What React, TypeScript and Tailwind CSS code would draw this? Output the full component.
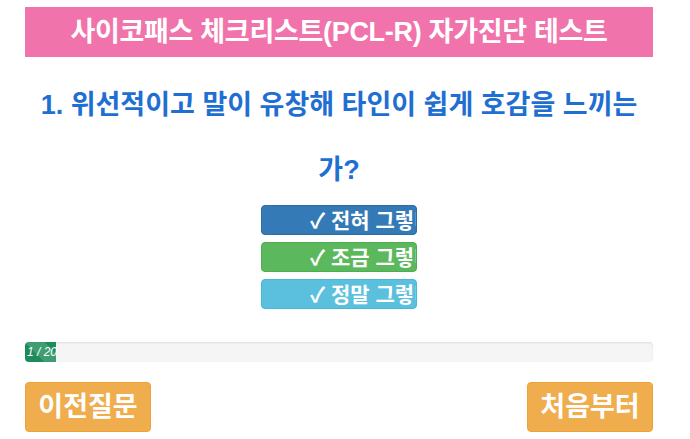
import React from "react"

const font = { fontFamily: '"Liberation Sans", "Noto Sans CJK KR", sans-serif' }

const answers = [
  { id: 1, label: "전혀 그렇다", color: "bg-[#337ab7] border-[#2e6da4]" },
  { id: 2, label: "조금 그렇다", color: "bg-[#5cb85c] border-[#4cae4c]" },
  { id: 3, label: "정말 그렇다", color: "bg-[#5bc0de] border-[#46b8da]" },
]

export default function App() {
  return (
    <div className="w-[690px] h-[439px] bg-white overflow-hidden" style={font}>
      <div className="ml-[25px] w-[628px] pt-[7px]">
        {/* title bar */}
        <div className="h-[50px] bg-[#f173ac] flex items-center justify-center">
          <h1 className="text-white text-[27px] font-bold leading-none tracking-[-0.3px]">
            사이코패스 체크리스트(PCL-R) 자가진단 테스트
          </h1>
        </div>

        {/* question */}
        <h2 className="mt-[16px] h-[132px] text-center text-[#1f6fd3] text-[27px] font-bold leading-[65px] whitespace-nowrap">
          1. 위선적이고 말이 유창해 타인이 쉽게 호감을 느끼는
          <br />
          가?
        </h2>

        {/* answers */}
        <div className="flex flex-col items-center gap-[7px]">
          {answers.map((a) => (
            <button
              key={a.id}
              className={`w-[156px] h-[30px] rounded-[4px] border overflow-hidden whitespace-nowrap text-left pl-[48px] text-white text-[21px] font-bold leading-none ${a.color}`}
            >
              ✓ {a.label}
            </button>
          ))}
        </div>

        {/* progress */}
        <div className="mt-[33px] h-[20px] rounded-[4px] bg-[#f5f5f5] shadow-[inset_0_1px_2px_rgba(0,0,0,0.1)] overflow-hidden">
          <div
            className="h-full bg-[#1d8b5b] text-white text-[12px] italic leading-[20px] pl-[2px] whitespace-nowrap"
            style={{
              width: `${(1 / 20) * 100}%`,
              backgroundImage:
                "linear-gradient(45deg, rgba(255,255,255,.15) 25%, transparent 25%, transparent 50%, rgba(255,255,255,.15) 50%, rgba(255,255,255,.15) 75%, transparent 75%, transparent)",
              backgroundSize: "40px 40px",
            }}
          >
            1 / 20
          </div>
        </div>

        {/* nav buttons */}
        <div className="mt-[20px] flex justify-between">
          <button className="w-[126px] h-[50px] rounded-[4px] bg-[#f0ad4e] border border-[#eea236] text-white text-[27px] font-bold">
            이전질문
          </button>
          <button className="w-[126px] h-[50px] rounded-[4px] bg-[#f0ad4e] border border-[#eea236] text-white text-[27px] font-bold">
            처음부터
          </button>
        </div>
      </div>
    </div>
  )
}
